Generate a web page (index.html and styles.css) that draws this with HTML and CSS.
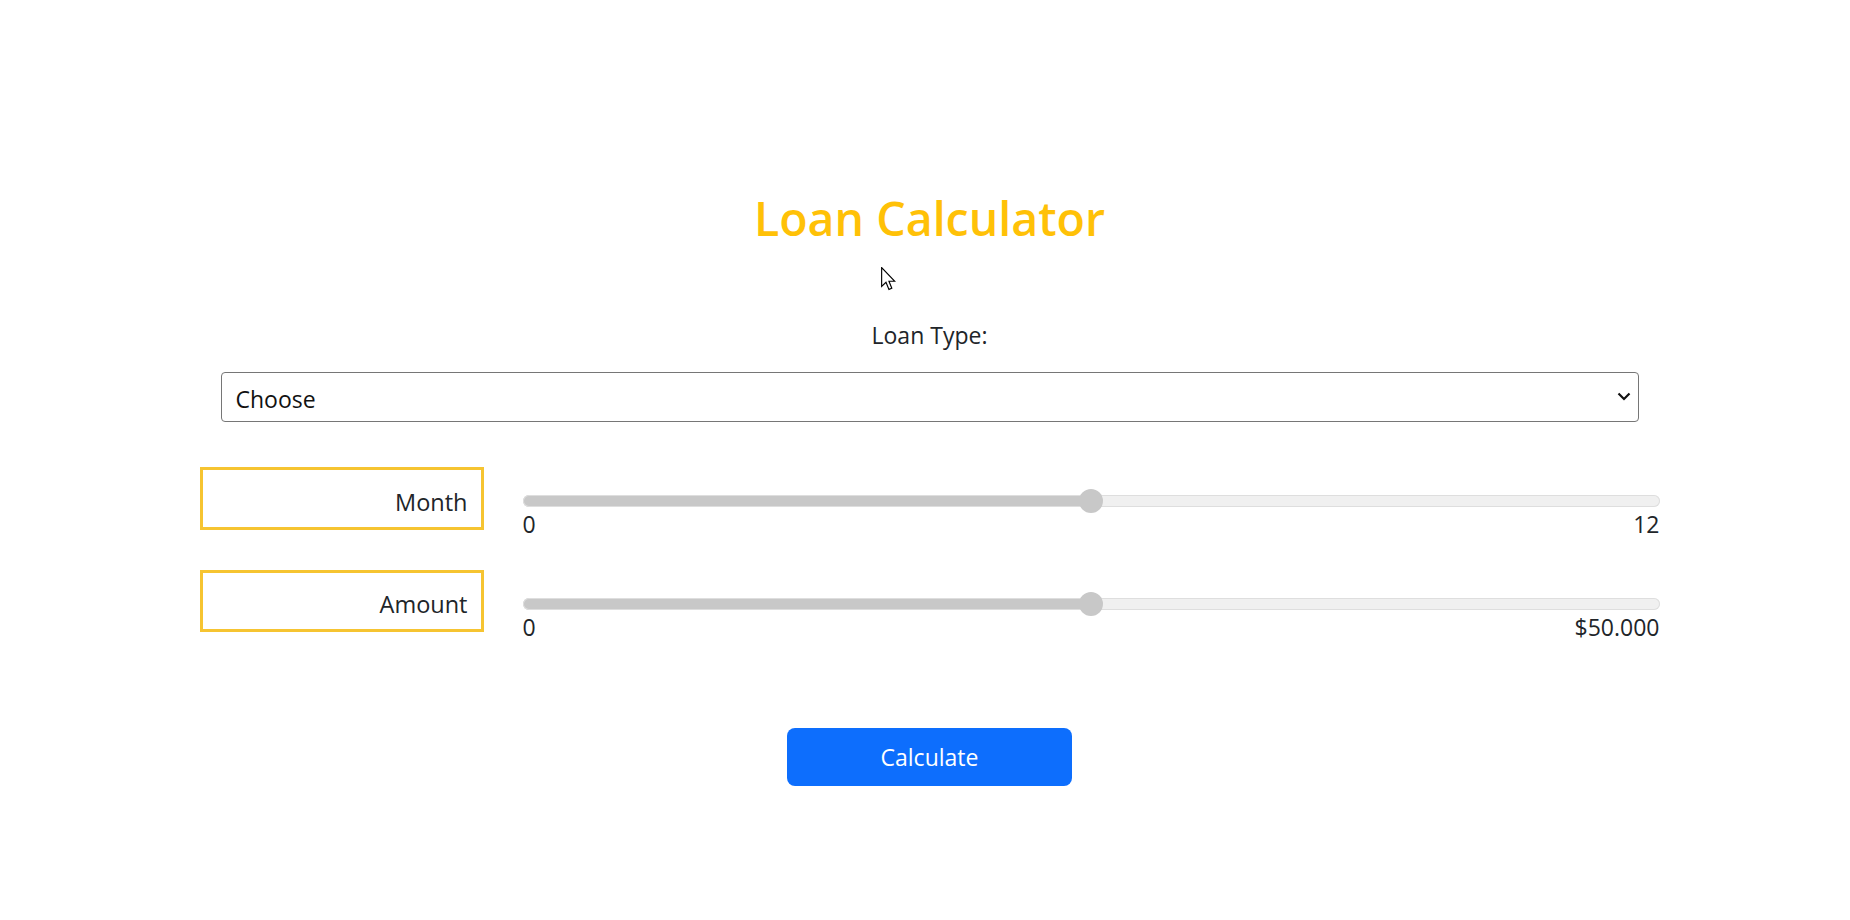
FILE: index.html
```html
<!DOCTYPE html>
<html lang="en">
<head>
<meta charset="utf-8">
<title>Loan Calculator</title>
<link rel="stylesheet" href="styles.css">
</head>
<body>
<main class="calc">
  <h1 class="calc-title">Loan Calculator</h1>
  <label class="type-label" for="loanType">Loan Type:</label>
  <div class="select-wrap">
    <select id="loanType" class="type-select">
      <option>Choose</option>
      <option>Personal</option>
      <option>Mortgage</option>
    </select>
    <svg class="chevron" width="14" height="9" viewBox="0 0 14 9"><path d="M1.5 1.5 L7 7 L12.5 1.5" fill="none" stroke="#111" stroke-width="2.2"/></svg>
  </div>

  <div class="row">
    <div class="value-box">Month</div>
    <div class="slider">
      <input type="range" class="range" min="0" max="12" value="6">
      <div class="limits"><span>0</span><span>12</span></div>
    </div>
  </div>

  <div class="row row-second">
    <div class="value-box">Amount</div>
    <div class="slider">
      <input type="range" class="range" min="0" max="50000" value="25000">
      <div class="limits"><span>0</span><span>$50.000</span></div>
    </div>
  </div>

  <button class="calc-btn" type="button">Calculate</button>
</main>
<svg class="cursor" width="15" height="24" viewBox="0 0 13 21"><path d="M0.5 0.5 L0.5 17 L4.3 13.4 L6.9 19.6 L9.4 18.6 L6.9 12.5 L12 12.5 Z" fill="#fff" stroke="#000" stroke-width="1" stroke-linejoin="miter"/></svg>
</body>
</html>
```

FILE: styles.css
```css
html, body {
  margin: 0;
  background: #fff;
}
body {
  padding-left: 9px;
  font-family: "Open Sans", "Noto Sans", sans-serif;
  color: #212529;
  position: relative;
  min-height: 920px;
}
.calc {
  width: 1460px;
  margin: 0 auto;
  padding-top: 188px;
  display: flex;
  flex-direction: column;
}
.calc-title {
  margin: 0;
  text-align: center;
  font-size: 46.5px;
  line-height: 60px;
  font-weight: 600;
  color: #ffc107;
}
.type-label {
  display: block;
  margin-top: 72px;
  text-align: center;
  font-size: 23px;
  line-height: 30px;
}
.select-wrap {
  position: relative;
  margin: 22px 21px 0;
}
.type-select {
  -webkit-appearance: none;
  appearance: none;
  display: block;
  width: 100%;
  height: 50px;
  box-sizing: border-box;
  border: 1px solid #767676;
  border-radius: 4px;
  background: #fff;
  padding: 3px 40px 0 14px;
  font-family: inherit;
  font-size: 23px;
  color: #111;
}
.chevron {
  position: absolute;
  right: 8px;
  top: 20px;
}
.row {
  display: grid;
  grid-template-columns: 284px 1fr;
  column-gap: 39px;
  align-items: start;
  margin-top: 45px;
}
.row-second {
  margin-top: 34px;
}
.value-box {
  height: 63px;
  box-sizing: border-box;
  border: 3px solid #f6c431;
  display: flex;
  align-items: center;
  justify-content: flex-end;
  padding: 6px 13px 0 0;
  font-size: 23.5px;
  line-height: 30px;
}
.row-second .value-box {
  height: 62px;
}
.slider {
  padding-top: 22px;
}
.range {
  -webkit-appearance: none;
  appearance: none;
  display: block;
  width: 100%;
  height: 24px;
  margin: 0;
  background: transparent;
}
.range::-webkit-slider-runnable-track {
  height: 12px;
  border-radius: 6px;
  background: linear-gradient(to right, #c8c8c8 50%, #f0f0f0 50%);
  box-shadow: inset 0 0 0 1px #dedede;
}
.range::-webkit-slider-thumb {
  -webkit-appearance: none;
  appearance: none;
  width: 24px;
  height: 24px;
  border-radius: 50%;
  background: #c8c8c8;
  border: none;
  margin-top: -6px;
}
.limits {
  display: flex;
  justify-content: space-between;
  margin-top: -1px;
  font-size: 23px;
  line-height: 24px;
}
.calc-btn {
  align-self: center;
  margin-top: 89px;
  width: 285px;
  height: 58px;
  border: none;
  border-radius: 8px;
  background: #0d6efd;
  color: #fff;
  font-family: inherit;
  font-size: 23px;
  padding: 0;
}
.cursor {
  position: absolute;
  left: 881px;
  top: 267px;
}
```
